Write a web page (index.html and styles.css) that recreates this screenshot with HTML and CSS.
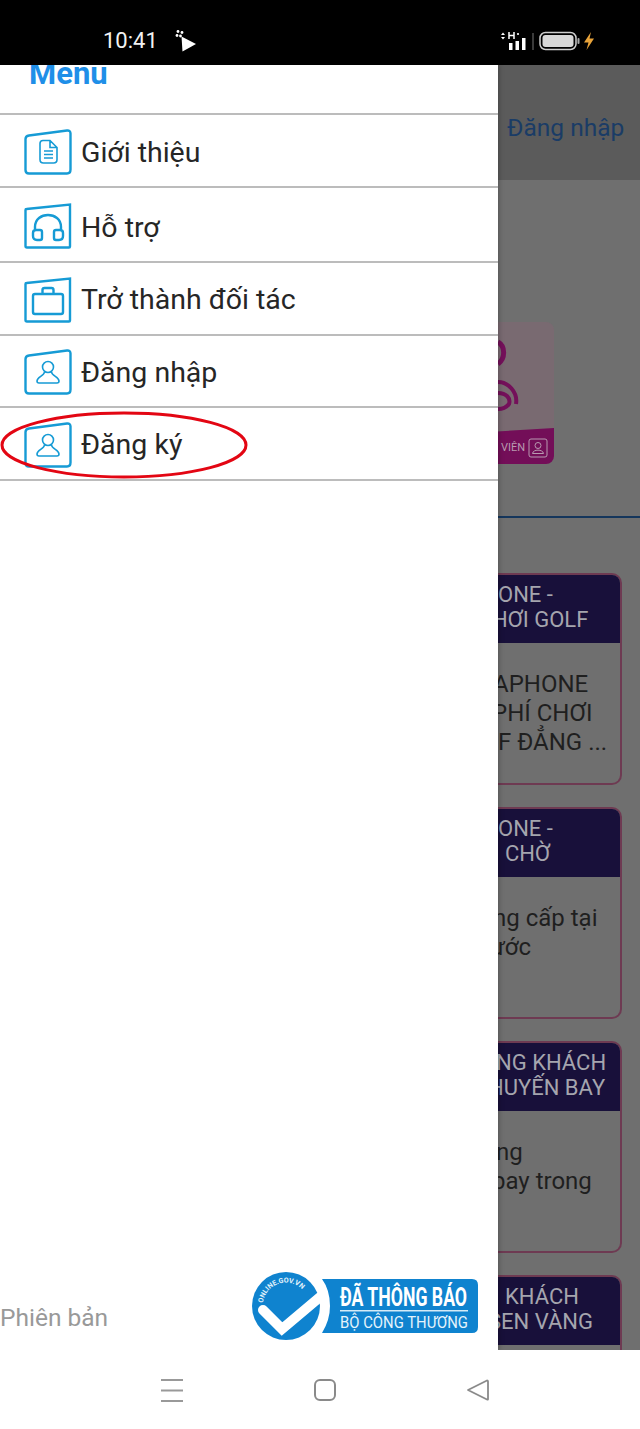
FILE: index.html
```html
<!DOCTYPE html>
<html lang="vi">
<head>
  <meta charset="UTF-8" />
  <meta name="viewport" content="width=device-width, initial-scale=1.0"/>
  <title>Menu</title>
  <link rel="stylesheet" href="styles.css">
</head>
<body>
  <div class="screen">
    <div class="status-bar">
      <div class="status-left">
        <span class="clock">10:41</span>
        <svg width="24" height="24" viewBox="0 0 24 24">
          <path d="M7.500 7.500 L22 15 L8.500 22.500 Z" fill="#fff"/>
          <circle cx="4" cy="2.500" r="1.400" fill="#fff"/><circle cx="8" cy="3.500" r="1.400" fill="#fff"/>
          <circle cx="3" cy="6.500" r="1.400" fill="#fff"/><circle cx="6.500" cy="7" r="1.400" fill="#fff"/>
        </svg>
      </div>
      <div class="status-right">
        <svg width="38" height="20" viewBox="0 0 38 20">
          <path d="M2 4 L4 1.500 L6 4 Z M2 6 L6 6 L4 8.500 Z" fill="#fff"/>
          <path d="M10 1 V8 M15 1 V8 M10 4.500 H15" stroke="#fff" stroke-width="1.500" fill="none"/>
          <circle cx="19" cy="3" r="1.100" fill="#fff"/>
          <rect x="10" y="12" width="3.500" height="7" fill="#fff"/>
          <rect x="16.500" y="10" width="3.500" height="9" fill="#fff"/>
          <rect x="23" y="7" width="3.500" height="12" fill="#fff"/>
          <rect x="33" y="2" width="2" height="17" fill="#3a3a3a"/>
        </svg>
        <svg width="42" height="20" viewBox="0 0 42 20">
          <rect x="1" y="1.500" width="36" height="17" rx="5.500" fill="none" stroke="#cfcfcf" stroke-width="1.500"/>
          <rect x="3.500" y="4" width="31" height="12" rx="3" fill="#d8d8d8"/>
          <rect x="38.500" y="7" width="2" height="6" rx="1" fill="#aaa"/>
        </svg>
        <svg width="12" height="18" viewBox="0 0 12 18">
          <path d="M8 0 L1 10.500 H5.500 L3.500 18 L11 6.500 H6.500 Z" fill="#e8a33a"/>
        </svg>
      </div>
    </div>

    <div class="content">
      <div class="page">
        <div class="page-header">
          <span class="login-link">Đăng nhập</span>
        </div>
        <div class="promo-row">
          <div class="promo">
            <svg class="promo-art" width="24" height="82" viewBox="0 0 24 82">
              <path d="M0 6 C7 10 8 22 0 28" fill="none" stroke="#74105a" stroke-width="5"/>
              <path d="M0 46 C10 46 20 56 18 68" fill="none" stroke="#74105a" stroke-width="4"/>
              <path d="M0 57 C8 57 13 62 11 68 C8 72 4 73 0 73" fill="none" stroke="#74105a" stroke-width="4"/>
            </svg>
            <div class="promo-foot">
              <span class="promo-label">VIÊN</span>
              <svg width="20" height="20" viewBox="0 0 20 20">
                <rect x="1" y="1" width="18" height="18" rx="2" fill="none" stroke="#b89ab0" stroke-width="1"/>
                <circle cx="10" cy="7.500" r="3" fill="none" stroke="#b89ab0" stroke-width="1"/>
                <path d="M4.500 15.500 C5 11 15 11 15.500 15.500 Z" fill="none" stroke="#b89ab0" stroke-width="1"/>
              </svg>
            </div>
          </div>
        </div>
        <div class="cards">
          <div class="card">
            <div class="card-head"><span>ONE -</span><span class="back-6">HƠI GOLF</span></div>
            <div class="card-body"><span class="back-5">APHONE</span><span class="back-6">PHÍ CHƠI</span><span>F ĐẲNG ...</span></div>
          </div>
          <div class="card">
            <div class="card-head"><span>ONE -</span><span class="on-7">CHỜ</span></div>
            <div class="card-body"><span class="back-5">ng cấp tại</span><span class="back-8">ước</span></div>
          </div>
          <div class="card">
            <div class="card-head"><span class="back-2">NG KHÁCH</span><span class="back-10">HUYẾN BAY</span></div>
            <div class="card-body"><span class="back-2">ng</span><span class="back-6">bay trong</span></div>
          </div>
          <div class="card">
            <div class="card-head"><span class="on-7">KHÁCH</span><span class="back-10">SEN VÀNG</span></div>
          </div>
        </div>
      </div>

      <aside class="drawer">
        <div class="menu-title"><span>Menu</span></div>
        <div class="menu-row">
          <svg class="menu-icon" width="48" height="46" viewBox="0 0 48 46">
            <path class="box" d="M5 6.500 L43 1.500 Q46.500 1.200 46.500 4.500 V40.500 Q46.500 44.500 43 44.500 H5 Q1.500 44.500 1.500 41 V10 Q1.500 7 5 6.500 Z"/>
            <path class="thin" d="M19 11.500 H26 L33 18.500 V30.500 Q33 34 29.500 34 H19.500 Q16 34 16 30.500 V14.500 Q16 11.500 19 11.500 Z M26 11.500 V18.500 H33 M20 22 H29 M20 25.500 H29 M20 29 H29"/>
          </svg>
          <span class="menu-text">Giới thiệu</span>
        </div>
        <div class="menu-row">
          <svg class="menu-icon" width="48" height="46" viewBox="0 0 48 46">
            <path class="box" d="M2.500 6 L46 1.500 V43.500 Q46 44.500 45 44.500 H3 Q1.500 44.500 1.500 43 V7 Q1.500 6 2.500 6 Z"/>
            <path class="box" d="M11 27 V24 C11 8 37 8 37 24 V27 M12 27 H16 Q18 27 18 29 V35 Q18 37 16 37 H13 Q9 37 9 33 V30 Q9 27 12 27 Z M36 27 H32 Q30 27 30 29 V35 Q30 37 32 37 H35 Q39 37 39 33 V30 Q39 27 36 27 Z"/>
          </svg>
          <span class="menu-text">Hỗ trợ</span>
        </div>
        <div class="menu-row">
          <svg class="menu-icon" width="48" height="46" viewBox="0 0 48 46">
            <path class="box" d="M2.500 6 L46 1.500 V43.500 Q46 44.500 45 44.500 H3 Q1.500 44.500 1.500 43 V7 Q1.500 6 2.500 6 Z"/>
            <path class="box" d="M11 17 H37 Q39 17 39 19 V35 Q39 37 37 37 H11 Q9 37 9 35 V19 Q9 17 11 17 Z M18.500 17 V13 Q18.500 11 20.500 11 H27.500 Q29.500 11 29.500 13 V17"/>
          </svg>
          <span class="menu-text">Trở thành đối tác</span>
        </div>
        <div class="menu-row">
          <svg class="menu-icon" width="48" height="46" viewBox="0 0 48 46">
            <path class="box" d="M5 6.500 L43 1.500 Q46.500 1.200 46.500 4.500 V40.500 Q46.500 44.500 43 44.500 H5 Q1.500 44.500 1.500 41 V10 Q1.500 7 5 6.500 Z"/>
            <circle class="thin" cx="24" cy="18" r="5.500"/>
            <path class="thin" d="M20.500 23 C20 27 13 28 13 32 Q13 34 15 34 H33 Q35 34 35 32 C35 28 28 27 27.500 23"/>
          </svg>
          <span class="menu-text">Đăng nhập</span>
        </div>
        <div class="menu-row">
          <svg class="menu-icon" width="48" height="46" viewBox="0 0 48 46">
            <path class="box" d="M5 6.500 L43 1.500 Q46.500 1.200 46.500 4.500 V40.500 Q46.500 44.500 43 44.500 H5 Q1.500 44.500 1.500 41 V10 Q1.500 7 5 6.500 Z"/>
            <circle class="thin" cx="24" cy="18" r="5.500"/>
            <path class="thin" d="M20.500 23 C20 27 13 28 13 32 Q13 34 15 34 H33 Q35 34 35 32 C35 28 28 27 27.500 23"/>
          </svg>
          <span class="menu-text">Đăng ký</span>
          <svg class="circled" width="250" height="70" viewBox="0 0 250 70">
            <ellipse cx="124" cy="35" rx="122" ry="32" fill="none" stroke="#e30613" stroke-width="3"/>
          </svg>
        </div>

        <div class="drawer-foot">
          <span class="version">Phiên bản</span>
          <svg class="notice" width="228" height="72" viewBox="0 0 228 72">
            <circle cx="34" cy="36" r="34" fill="#0f83cf"/>
            <path d="M11 40 L30 59 L68 27" fill="none" stroke="#fff" stroke-width="10" stroke-linecap="round"/>
            <defs><path id="arc" d="M11 33 A23 23 0 0 1 54 24.500"/></defs>
            <text class="notice-arc"><textPath href="#arc">ONLINE.GOV.VN</textPath></text>
            <path d="M70 9 H220 Q226 9 226 15 V57 Q226 63 220 63 H70 Q78 50 78 36 Q78 20 70 9 Z" fill="#0f83cf"/>
            <text class="notice-big" transform="translate(88 36) scale(0.68 1)">ĐÃ THÔNG BÁO</text>
            <rect x="88" y="40" width="128" height="1.500" fill="#d5ecf8"/>
            <text class="notice-small" transform="translate(88 58) scale(0.93 1)">BỘ CÔNG THƯƠNG</text>
          </svg>
        </div>
      </aside>
    </div>

    <div class="nav-bar">
      <svg width="24" height="24" viewBox="0 0 24 24">
        <path d="M1 2 H23 M1 12.500 H23 M1 23 H23" stroke="#999" stroke-width="1.800" fill="none"/>
      </svg>
      <svg width="24" height="24" viewBox="0 0 24 24">
        <rect x="2" y="2" width="20" height="20" rx="5" fill="none" stroke="#8a8a8a" stroke-width="2"/>
      </svg>
      <svg width="24" height="24" viewBox="0 0 24 24">
        <path d="M2 12 L21 2.500 Q22 2.500 22 3.500 V21 Q22 22 21 21.500 Z" fill="none" stroke="#8a8a8a" stroke-width="1.800" stroke-linejoin="round"/>
      </svg>
    </div>
  </div>
</body>
</html>
```

FILE: styles.css
```css
* {
  box-sizing: border-box;
}

body {
  margin: 0;
  font-family: 'Roboto', sans-serif;
  background: #fff;
}

.screen {
  width: 640px;
  height: 1429px;
  display: flex;
  flex-direction: column;
  overflow: hidden;
}

/* status bar */
.status-bar {
  height: 65px;
  flex: none;
  background: #000;
  display: flex;
  justify-content: space-between;
  align-items: center;
  padding: 16px 45px 0 103px;
}

.status-left,
.status-right {
  display: flex;
  align-items: center;
}

.status-left {
  gap: 16px;
}

.status-right {
  gap: 2px;
}

.clock {
  color: #f2f2f2;
  font-size: 22px;
}

/* main area, the page runs on under the drawer */
.content {
  position: relative;
  flex: 1;
  min-height: 0;
  overflow: hidden;
  background: #6f6f6f;
}

.page {
  margin-left: 470px;
  height: 100%;
}

.page-header {
  height: 115px;
  background: #5b5b5b;
  padding: 48px 0 0 37px;
}

.login-link {
  color: #1a3c66;
  font-size: 24.5px;
  white-space: nowrap;
}

.promo-row {
  height: 338px;
  padding-top: 142px;
  border-bottom: 2px solid #15365c;
  margin-bottom: 55px;
}

.promo {
  width: 84px;
  height: 142px;
  background: #796a71;
  border-radius: 0 8px 8px 0;
  display: flex;
  flex-direction: column;
  justify-content: space-between;
  overflow: hidden;
}

.promo-art {
  margin: 14px 0 0 28px;
}

.promo-foot {
  height: 36px;
  background: #730e58;
  clip-path: polygon(0 14%, 100% 0, 100% 100%, 0 100%);
  display: flex;
  align-items: center;
  justify-content: flex-end;
  gap: 3px;
  padding: 3px 6px 0 0;
}

.promo-label {
  color: #b89ab0;
  font-size: 11px;
}

.cards {
  display: flex;
  flex-direction: column;
  gap: 22px;
}

.card {
  width: 152px;
  height: 212px;
  flex: none;
  border: 2px solid #6e3a52;
  border-left: none;
  border-radius: 0 10px 10px 0;
  overflow: hidden;
}

.card-head {
  height: 68px;
  background: #18103a;
  color: #a5a5ae;
  font-size: 22px;
  line-height: 25px;
  padding: 7px 0 0 28px;
  display: flex;
  flex-direction: column;
  white-space: nowrap;
}

.card-body {
  color: #1f1f1f;
  font-size: 24px;
  line-height: 29px;
  padding: 27px 0 0 28px;
  display: flex;
  flex-direction: column;
  white-space: nowrap;
}

/* where each line starts, the left part sits behind the drawer */
.back-2 {
  margin-left: -2px;
}

.back-5 {
  margin-left: -5px;
}

.back-6 {
  margin-left: -6px;
}

.back-8 {
  margin-left: -8px;
}

.back-10 {
  margin-left: -10px;
}

.on-7 {
  margin-left: 7px;
}

/* drawer */
.drawer {
  position: absolute;
  top: 0;
  left: 0;
  width: 498px;
  height: 100%;
  background: #fff;
  box-shadow: 1px 0 5px rgba(0, 0, 0, 0.25);
  display: flex;
  flex-direction: column;
}

.menu-title {
  height: 50px;
  border-bottom: 2px solid #bcbcbc;
  padding-left: 29px;
  overflow: hidden;
}

.menu-title span {
  display: block;
  margin-top: -8px;
  color: #1f8fe8;
  font-size: 31px;
  font-weight: 700;
  line-height: 34px;
}

.menu-row {
  position: relative;
  height: 73px;
  border-bottom: 2px solid #bcbcbc;
  display: flex;
  align-items: center;
  gap: 9px;
  padding-left: 24px;
}

.menu-row:nth-child(3) {
  height: 75px;
}

.menu-row:nth-child(5) {
  height: 72px;
}

.menu-icon {
  flex: none;
  margin-top: 2px;
}

.menu-icon .box {
  fill: none;
  stroke: #169bd5;
  stroke-width: 2.4;
}

.menu-icon .thin {
  fill: none;
  stroke: #169bd5;
  stroke-width: 1.6;
}

.menu-text {
  margin-top: 2px;
  color: #262626;
  font-size: 28.500px;
  white-space: nowrap;
}

.menu-row:nth-child(2) .menu-text {
  margin-top: 4px;
}

.menu-row:nth-child(3) .menu-text {
  margin-top: 6px;
}

.circled {
  position: absolute;
  left: 0;
  top: 2px;
  pointer-events: none;
}

.drawer-foot {
  margin-top: auto;
  height: 80px;
  display: flex;
  justify-content: space-between;
  align-items: center;
  padding: 0 18px 0 0;
}

.notice {
  align-self: flex-start;
}

.version {
  color: #999;
  font-size: 24.5px;
  margin-top: 14px;
}

.notice-big {
  fill: #fff;
  font-size: 26px;
  font-weight: 700;
}

.notice-small {
  fill: #e4f3fb;
  font-size: 16px;
}

.notice-arc {
  fill: #e4f3fb;
  font-size: 7px;
  font-weight: 700;
}

/* nav bar */
.nav-bar {
  position: relative;
  height: 79px;
  flex: none;
  background: #fff;
  display: flex;
  justify-content: flex-end;
  align-items: center;
  gap: 129px;
  padding-right: 150px;
}
```
